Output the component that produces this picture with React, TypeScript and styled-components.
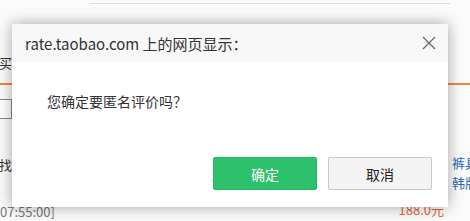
import React from "react";
import styled, { createGlobalStyle } from "styled-components";

const GlobalStyle = createGlobalStyle`
  html, body {
    margin: 0;
    padding: 0;
    width: 470px;
    height: 221px;
    overflow: hidden;
    background: #fafafa;
    font-family: "Microsoft YaHei", "Noto Sans CJK SC", "Liberation Sans", sans-serif;
  }
`;

const Page = styled.div`
  position: relative;
  width: 470px;
  height: 221px;
  overflow: hidden;
  background: #fbfbfb;
`;

const TopRule = styled.div`
  margin: 3px 20px 0 90px;
  border-top: 1px solid #dcdcdc;
`;

const Columns = styled.div`
  display: flex;
  justify-content: space-between;
  margin-top: 49px;
`;

const LeftCol = styled.div`
  display: flex;
  flex-direction: column;
  margin-left: -14px;
  width: 80px;
`;

const RightCol = styled.div`
  display: flex;
  flex-direction: column;
  align-items: flex-end;
  margin-right: -8px;
  padding-top: 100px;
`;

const Label = styled.span<{ $color?: string; $gap?: number }>`
  font-size: 13px;
  line-height: 20px;
  margin-top: ${(p) => p.$gap || 0}px;
  color: ${(p) => p.$color || "#333"};
  white-space: nowrap;
`;

const OrangeRule = styled.div`
  position: absolute;
  left: 0;
  right: 0;
  top: 83px;
  border-top: 2px solid #f2843f;
`;

const SelectBox = styled.div`
  margin-top: 26px;
  width: 24px;
  height: 18px;
  border: 1px solid #888;
  background: #fff;
`;

const Time = styled.span`
  margin-top: 27px;
  font-size: 13px;
  color: #777;
  margin-left: 14px;
`;

const Price = styled.span`
  font-size: 13px;
  color: #e0673c;
  margin-right: 34px;
  margin-top: 7px;
`;

const Dialog = styled.div`
  position: absolute;
  left: 12px;
  top: 24px;
  width: 436px;
  height: 183px;
  background: #fff;
  box-shadow: 0 0 14px rgba(0, 0, 0, 0.35);
  display: flex;
  flex-direction: column;
`;

const Header = styled.div`
  height: 38px;
  background: #f8f8f8;
  display: flex;
  align-items: center;
  justify-content: space-between;
  padding: 0 10px 0 13px;
`;

const Title = styled.span`
  font-size: 15px;
  color: #333;
`;

const Close = styled.button`
  border: none;
  background: none;
  padding: 0;
  width: 18px;
  height: 18px;
  display: flex;
  align-items: center;
  justify-content: center;
`;

const Body = styled.div`
  flex: 1;
  display: flex;
  flex-direction: column;
  justify-content: space-between;
  padding: 29px 16px 17px 35px;
`;

const Message = styled.div`
  font-size: 14px;
  color: #333;
`;

const Actions = styled.div`
  display: flex;
  justify-content: flex-end;
  gap: 11px;
`;

const Button = styled.button<{ $primary?: boolean }>`
  width: 104px;
  height: 33px;
  border-radius: 2px;
  font-size: 14px;
  font-family: inherit;
  border: 1px solid ${(p) => (p.$primary ? "#27b85f" : "#c9c9c9")};
  background: ${(p) => (p.$primary ? "#2ec16b" : "#f4f4f4")};
  color: ${(p) => (p.$primary ? "#fff" : "#222")};
`;

export default function App() {
  return (
    <>
      <GlobalStyle />
      <Page>
        <TopRule />
        <OrangeRule />
        <Columns>
          <LeftCol>
            <Label>购买</Label>
            <SelectBox />
            <Label $gap={36}>自找</Label>
            <Time>07:55:00]</Time>
          </LeftCol>
          <RightCol>
            <Label $color="#2d6bb5">裤具</Label>
            <Label $color="#2d6bb5">韩版</Label>
            <Price>188.0元</Price>
          </RightCol>
        </Columns>
        <Dialog>
          <Header>
            <Title>rate.taobao.com 上的网页显示：</Title>
            <Close aria-label="关闭">
              <svg width="14" height="14" viewBox="0 0 14 14">
                <path d="M1 1 L13 13 M13 1 L1 13" stroke="#666" strokeWidth="1.2" />
              </svg>
            </Close>
          </Header>
          <Body>
            <Message>您确定要匿名评价吗？</Message>
            <Actions>
              <Button $primary>确定</Button>
              <Button>取消</Button>
            </Actions>
          </Body>
        </Dialog>
      </Page>
    </>
  );
}
